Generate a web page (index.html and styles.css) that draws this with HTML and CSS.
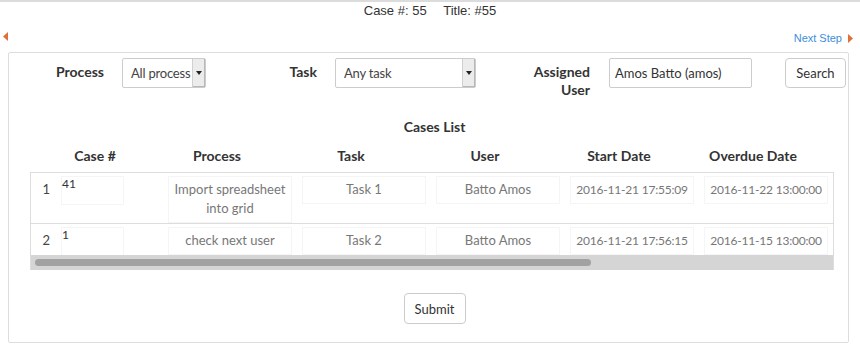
FILE: index.html
```html
<!DOCTYPE html>
<html lang="en">
<head>
    <meta charset="UTF-8">
    <title>Case #55</title>
    <link rel="stylesheet" href="styles.css">
</head>
<body>

    <div class="case-title">
        <span>Case #: 55</span>
        <span class="case-name">Title: #55</span>
    </div>

    <div class="steps">
        <a href="#" class="step-prev" title="Previous Step">
            <svg width="5" height="9" viewBox="0 0 5 9"><path d="M5 0 L0 4.5 L5 9 Z" fill="#e0703a"/></svg>
        </a>
        <a href="#" class="step-next">Next Step
            <svg width="5" height="9" viewBox="0 0 5 9"><path d="M0 0 L5 4.5 L0 9 Z" fill="#e0703a"/></svg>
        </a>
    </div>

    <div class="panel">
        <form class="filters">
            <label class="filter-label label-process">Process</label>
            <div class="select select-process">
                <select>
                    <option>All process</option>
                </select>
                <span class="select-arrow"></span>
            </div>

            <label class="filter-label label-task">Task</label>
            <div class="select select-task">
                <select>
                    <option>Any task</option>
                </select>
                <span class="select-arrow"></span>
            </div>

            <label class="filter-label label-user">Assigned<br>User</label>
            <input class="user-input" type="text" value="Amos Batto (amos)">

            <button type="button" class="btn btn-search">Search</button>
        </form>

        <div class="cases">
            <div class="cases-title">Cases List</div>

            <div class="grid-head">
                <div>Case #</div>
                <div>Process</div>
                <div>Task</div>
                <div>User</div>
                <div>Start Date</div>
                <div>Overdue Date</div>
            </div>

            <div class="grid-box">
                <div class="grid-view">
                    <div class="grid-body" id="grid-body"></div>
                </div>
                <!-- горизонтальная прокрутка грида -->
                <div class="grid-scroll"><div class="grid-thumb"></div></div>
            </div>

            <div class="actions">
                <button type="button" class="btn btn-submit">Submit</button>
            </div>
        </div>
    </div>

    <script>
        const cases = [
            { app: '41', process: 'Import spreadsheet into grid', task: 'Task 1', user: 'Batto Amos', start: '2016-11-21 17:55:09', due: '2016-11-22 13:00:00' },
            { app: '1', process: 'check next user', task: 'Task 2', user: 'Batto Amos', start: '2016-11-21 17:56:15', due: '2016-11-15 13:00:00' }
        ];

        const fields = ['process', 'task', 'user', 'start', 'due'];
        const body = document.getElementById('grid-body');

        cases.forEach((c, i) => {
            const row = document.createElement('div');
            row.className = 'grid-row';

            const num = document.createElement('div');
            num.className = 'row-num';
            num.textContent = i + 1;
            row.appendChild(num);

            const app = document.createElement('div');
            app.className = 'cell cell-app';
            app.innerHTML = '<span class="cell-box">' + c.app + '</span>';
            row.appendChild(app);

            fields.forEach(f => {
                const cell = document.createElement('div');
                cell.className = 'cell cell-' + f;
                cell.innerHTML = '<span class="cell-box">' + c[f] + '</span>';
                row.appendChild(cell);
            });

            body.appendChild(row);
        });
    </script>
</body>
</html>
```

FILE: styles.css
```css
body {
    margin: 0;
    padding: 0;
    border-top: 2px solid #dcdcdc;
    font-family: Lato, "Noto Sans", sans-serif;
    font-size: 13px;
    color: #333;
    background-color: #fff;
}

/* Шапка кейса */
.case-title {
    text-align: center;
    font-family: "Liberation Sans", Arial, sans-serif;
    font-size: 13px;
    line-height: 16px;
    padding-top: 1px;
    height: 25px;
}

.case-name {
    margin-left: 13px;
}

.steps {
    display: flex;
    justify-content: space-between;
    align-items: flex-start;
    height: 24px;
    box-sizing: border-box;
    padding: 4px 7px 0 3px;
    font-family: "Liberation Sans", Arial, sans-serif;
    font-size: 11px;
    line-height: 13px;
}

.steps a {
    display: flex;
    align-items: center;
    gap: 6px;
    color: #3d8ddc;
    text-decoration: none;
}

/* Основная панель */
.panel {
    margin: 0 11px 0 8px;
    height: 289px;
    border: 1px solid #dddddd;
    border-radius: 2px;
}

.filters {
    display: flex;
    align-items: flex-start;
    margin: 5px 0 0 0;
    height: 46px;
}

.filter-label {
    font-size: 14px;
    font-weight: bold;
    text-align: right;
    line-height: 18px;
    padding-top: 5px;
    margin-right: 18px;
    color: #333;
}

.label-process {
    width: 95px;
}

.label-task {
    width: 111px;
}

.label-user {
    width: 114px;
    margin-right: 19px;
}

.select {
    display: flex;
    height: 28px;
    border: 1px solid #cccccc;
    border-radius: 2px;
    background-color: #fff;
}

.select select {
    flex: 1;
    min-width: 0;
    appearance: none;
    -webkit-appearance: none;
    border: none;
    background: transparent;
    font-family: inherit;
    font-size: 13px;
    letter-spacing: -0.2px;
    color: #444;
    padding: 0 0 0 8px;
    outline: none;
}

.select-process {
    width: 82px;
}

.select-task {
    width: 139px;
}

.select-arrow {
    width: 12px;
    border-left: 1px solid #d0d0d0;
    background-color: #ececec;
    box-shadow: inset -1px -1px 0 #b8b8b8;
    display: flex;
    align-items: center;
    justify-content: center;
}

.select-arrow::after {
    content: "";
    border-left: 3px solid transparent;
    border-right: 3px solid transparent;
    border-top: 4px solid #222;
}

.user-input {
    box-sizing: border-box;
    height: 30px;
    width: 143px;
    border: 1px solid #cccccc;
    border-radius: 2px;
    padding: 0 5px;
    font-family: inherit;
    font-size: 13px;
    color: #333;
}

.btn {
    background-color: #fff;
    border: 1px solid #cccccc;
    border-radius: 4px;
    font-family: inherit;
    font-size: 13px;
    color: #333;
    cursor: pointer;
}

.btn-search {
    margin-left: 33px;
    width: 61px;
    height: 30px;
    padding-bottom: 2px;
}

/* Список кейсов */
.cases {
    padding-left: 12px;
}

.cases-title {
    text-align: center;
    font-size: 14px;
    font-weight: bold;
    line-height: 18px;
    margin-top: 14px;
}

.grid-head {
    display: grid;
    grid-template-columns: 110px repeat(5, 134px);
    margin: 11px 0 0 19px;
    font-size: 14px;
    font-weight: bold;
    line-height: 18px;
    text-align: center;
}

.grid-box {
    margin: 7px 0 0 9px;
    width: 804px;
    box-sizing: border-box;
    border: 1px solid #dddddd;
    border-bottom: none;
}

.grid-view {
    overflow: hidden;
}

.grid-body {
    width: 1148px;
}

.grid-row {
    display: grid;
    grid-template-columns: 30px 107px repeat(5, 134px);
    align-items: start;
    padding-top: 3px;
    border-bottom: 1px solid #dddddd;
}

.grid-row:last-child {
    border-bottom: none;
    height: 28px;
    overflow: hidden;
}

.row-num {
    text-align: right;
    padding: 4px 11px 0 0;
    line-height: 19px;
    color: #444;
}

.cell-box {
    display: block;
    width: 124px;
    box-sizing: border-box;
    border: 1px solid #f5f5f5;
    padding: 3px 2px 4px;
    line-height: 19px;
    text-align: center;
    white-space: nowrap;
    color: #777;
}

.cell-process .cell-box {
    white-space: normal;
}

.cell-start .cell-box,
.cell-due .cell-box {
    font-size: 12px;
    letter-spacing: -0.2px;
}

.cell-app .cell-box {
    width: 63px;
    height: 29px;
    padding: 0;
    text-align: left;
    font-size: 12px;
    line-height: 14px;
    color: #333;
}

.grid-scroll {
    height: 15px;
    background-color: #d5d5d5;
    padding: 4px;
    box-sizing: border-box;
}

.grid-thumb {
    width: 556px;
    height: 7px;
    border-radius: 4px;
    background-color: #a2a2a2;
}

.actions {
    display: flex;
    justify-content: center;
    margin-top: 23px;
}

.btn-submit {
    width: 62px;
    height: 31px;
}
```
